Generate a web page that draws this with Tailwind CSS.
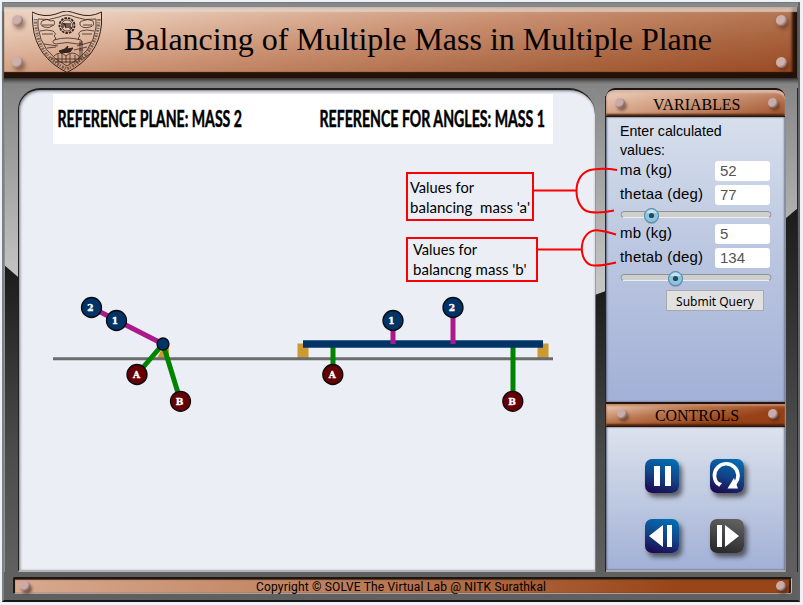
<!DOCTYPE html>
<html lang="en">
<head>
<meta charset="utf-8">
<title>Balancing of Multiple Mass in Multiple Plane</title>
<script src="https://cdn.jsdelivr.net/npm/@tailwindcss/browser@4"></script>
</head>
<body class="w-[803px] h-[605px] overflow-hidden bg-[#edf1f8] pt-[2px] pl-[2px] font-['Liberation_Sans',sans-serif] text-black">
<svg class="absolute size-0">
  <defs>
    <linearGradient id="light" gradientUnits="userSpaceOnUse" x1="0" y1="0" x2="0" y2="190"><stop offset="0" stop-color="#878787"/><stop offset="1" stop-color="#c4c4c4"/></linearGradient>
    <linearGradient id="dark" x1="0" y1="0" x2="0" y2="1"><stop offset="0" stop-color="#1b1b1b"/><stop offset="0.6" stop-color="#4b4b4b"/><stop offset="1" stop-color="#606060"/></linearGradient>
    <linearGradient id="blue" x1="0.3" y1="1" x2="0.6" y2="0"><stop offset="0" stop-color="#1d0b50"/><stop offset="0.5" stop-color="#124388"/><stop offset="1" stop-color="#036bb0"/></linearGradient>
    <linearGradient id="gray" x1="0.3" y1="1" x2="0.6" y2="0"><stop offset="0" stop-color="#292929"/><stop offset="1" stop-color="#606060"/></linearGradient>
  </defs>
</svg>
<div class="relative w-[798px] h-[600px] flex flex-col bg-[#606060] border-l-2 border-l-[#7d8281] border-t border-t-[#777] border-r-2 border-r-[#626267] border-b-2 border-b-[#171717]">
  <div class="h-[4px] shrink-0 bg-[#858789]"></div>
  <header class="h-[71px] w-[793px] shrink-0 flex items-center pl-[8px] pr-[10px] bg-[linear-gradient(172deg,#eccfbc_10%,#c98f70_45%,#a96540_75%,#98451c_100%)] shadow-[inset_0_6px_1px_-1px_#e0d8d1b0,inset_-5px_0_3px_#241107,inset_0_-6px_1px_#241107,0_4px_3px_#363636]">
    <div class="w-[12px] h-[53px] -mt-[2px] flex flex-col justify-between">
      <span class="size-[11px] rounded-full bg-[radial-gradient(circle_at_35%_35%,#cdb1ad_45%,#795247_80%)] shadow-[2px_3px_4px_#4a251588]"></span>
      <span class="size-[11px] rounded-full bg-[radial-gradient(circle_at_35%_35%,#cdb1ad_45%,#795247_80%)] shadow-[2px_3px_4px_#4a251588]"></span>
    </div>
    <svg class="ml-[8px] mt-[-1px] w-[70px] h-[62px]" viewBox="0 0 70 62" fill="none" stroke="#33231c" stroke-width="1">
      <path d="M0 1Q12 7 24 3Q31 0 35 0Q40 1 46 3Q58 7 69.500 1V13Q67 45 35 61.500Q4 46 1 15Z"/>
      <path d="M6 8Q17 10 27 6Q35 2 43 6Q53 10 64 8V16Q61 42 35 55Q9 42 6 16Z" stroke-width=".8"/>
      <path d="M3.500 8Q4 45 35 58Q65 43 67 8" stroke-width="3.200" stroke-dasharray="1.100 1.400 2 1" opacity=".55"/>
      <circle cx="35" cy="14.500" r="7.500" stroke-width="1.800" stroke-dasharray="2.600 1"/><circle cx="35" cy="14.500" r="5.600" stroke-width=".8"/>
      <path d="M31 12v5M32 12l2 5v-5M36 12v5M38 12v5h2" stroke-width="1.300"/>
      <path d="M10 10q5-3 9 0q5-2 3 4q-5 4-10 2q-5-2-2-6zM50 10q6-3 11 0q2 5-3 6q-7 2-10-2q-1-4 2-4M8 20q7-2 13 0q4 3 1 5q3 2 1 4M62 20q-8-2-13 0q-4 3-1 5q-3 2-1 4M10 14h11M51 14h9M10 23h11M50 23h10M22 29q13-4 27 0q2 4-3 4q-11-3-22 0q-5-1-2-4M12 33l14 2M15 37l9-1M45 35l14-4M42 39l13-3M22 45q6-6 12 0v7M34 45q6-6 13 0v6M20 46v3M26 43v9M30 43v9M38 43v10M43 44v7M21 48h29M23 51h23M48 30v17M50 30v17M47 33h4M47 39h4M51 48l8-6" stroke-width=".9" opacity=".85"/>
      <path d="M27 40q6-1 9-5l-1 3 6-1-3 4-9 1z" fill="#33231c"/>
    </svg>
    <svg class="ml-[22px] -mt-[4px] w-[590px] h-[50px] overflow-visible" viewBox="0 0 590 50"><text x="0" y="34" font-family="Liberation Serif, serif" font-size="31" textLength="588" lengthAdjust="spacingAndGlyphs">Balancing of Multiple Mass in Multiple Plane</text></svg>
    <div class="ml-auto w-[11px] h-[53px] -mt-[2px] flex flex-col justify-between">
      <span class="size-[11px] rounded-full bg-[radial-gradient(circle_at_35%_35%,#cdb1ad_45%,#795247_80%)] shadow-[2px_3px_4px_#4a251588]"></span>
      <span class="size-[11px] rounded-full bg-[radial-gradient(circle_at_35%_35%,#cdb1ad_45%,#795247_80%)] shadow-[2px_3px_4px_#4a251588]"></span>
    </div>
  </header>
  <div class="h-[10px] shrink-0 bg-[linear-gradient(#303030,#666_35%,#858585_60%)]"></div>

  <div class="h-[484px] shrink-0 flex bg-[linear-gradient(#898989_20%,#606060_70%)]">
    <svg class="w-[14px] h-[484px] shrink-0" viewBox="0 0 14 484"><path d="M0 0H14V189L0 177Z" fill="url(#light)"/><path d="M0 177L14 189V484H0Z" fill="url(#dark)"/><path d="M0 0V484" stroke="#8d9190" stroke-width="2"/></svg>
    <main class="w-[577px] h-[484px] shrink-0 bg-[#ebeef4] rounded-tl-[22px] rounded-tr-[26px] border-t-2 border-t-[#202020] border-l border-l-[#202020] border-b-2 border-b-[#b1b5b6] shadow-[inset_1px_1px_3px_#777b85]">
      <svg class="w-[576px] h-[480px]" viewBox="19 90 576 480">
        <rect x="53" y="94" width="500" height="50" fill="#fff"/>
        <g font-family="Lato, sans-serif" font-weight="700" font-size="22" stroke="#000" stroke-width=".5">
          <text x="57.500" y="127" textLength="184.500" lengthAdjust="spacingAndGlyphs">REFERENCE PLANE: MASS 2</text>
          <text x="319.500" y="127" textLength="225.500" lengthAdjust="spacingAndGlyphs">REFERENCE FOR ANGLES: MASS 1</text>
        </g>
        <path d="M157 358L163 347L169 348V358ZM297.500 343.500H308.500V358H297.500ZM537.500 343.500H548.500V358H537.500Z" fill="#cc9933"/>
        <path d="M53 358.800H553" stroke="#6b6b6b" stroke-width="3"/>
        <g stroke-width="5">
          <path d="M91.500 307.500L163 344" stroke="#ab1a8c"/>
          <path d="M163 344L137 374.500M163 344L180.500 401M333 344V374M513 344V401" stroke="#008400"/>
          <path d="M303 344H543" stroke="#003366" stroke-width="7.500"/>
          <path d="M393 320V344M453 307V344" stroke="#ab1a8c"/>
        </g>
        <g stroke="#080b12" stroke-width="1.300">
          <g fill="#003366"><circle cx="91.500" cy="307.500" r="10"/><circle cx="116.500" cy="320.500" r="10"/><circle cx="163" cy="344" r="6"/><circle cx="393" cy="320.500" r="10"/><circle cx="453" cy="307.500" r="10"/></g>
          <g fill="#660000"><circle cx="137" cy="374.500" r="10"/><circle cx="180.500" cy="401.300" r="10"/><circle cx="332.800" cy="374.500" r="10"/><circle cx="512.800" cy="401.300" r="10"/></g>
        </g>
        <g fill="#fff" stroke="#fff" stroke-width=".4" font-family="DejaVu Serif, serif" font-weight="700" font-size="9" text-anchor="middle">
          <text x="90.500" y="311">2</text><text x="115" y="324">1</text><text x="391.500" y="324">1</text><text x="452" y="311">2</text>
          <text x="136.500" y="378">A</text><text x="332.300" y="378">A</text><text x="179.500" y="404.500">B</text><text x="512" y="404.500">B</text>
        </g>
      </svg>
    </main>
    <svg class="w-[11px] h-[484px] shrink-0" viewBox="0 0 11 484"><path d="M0 0H11V203L0 207Z" fill="url(#light)"/><path d="M0 207L11 203V484H0Z" fill="url(#dark)"/><path d="M.500 20V484" stroke="#8b8f92" opacity=".7"/><path d="M10.500 8V484" stroke="#262626"/></svg>
    <aside class="w-[179px] h-[484px] shrink-0 flex flex-col border-b-2 border-b-[#a5a9ac]">
      <h2 class="h-[29px] shrink-0 flex items-center justify-between px-[9px] pt-[2px] rounded-t-[9px] border-t-2 border-[#1c1511] border-b bg-[linear-gradient(168deg,#f0d3c0,#cf9b7e_45%,#a05029)] shadow-[inset_0_3px_2px_#d8b8a5,inset_0_-2px_2px_#4d260f]">
        <span class="size-[10px] rounded-full bg-[radial-gradient(circle_at_35%_35%,#c9abaa_45%,#644a46_80%)] shadow-[2px_3px_3px_#4a251588] -mt-[3px]"></span>
        <svg class="w-[88px] h-[20px] ml-px mt-[1px]" viewBox="0 0 88 20"><text x="0" y="15" font-family="Liberation Serif, serif" font-size="16" textLength="87.500" lengthAdjust="spacingAndGlyphs">VARIABLES</text></svg>
        <span class="size-[10px] rounded-full bg-[radial-gradient(circle_at_35%_35%,#c9abaa_45%,#644a46_80%)] shadow-[2px_3px_3px_#4a251588] mr-[-2px] -mt-[3px]"></span>
      </h2>
      <form class="h-[285px] shrink-0 pl-[14px] pt-[5px] bg-[linear-gradient(#d7dfec,#bcc8e1_45%,#a3b0d7)] shadow-[inset_1px_0_2px_#646c80,inset_-1px_0_2px_#777f90] text-[15px]">
        <p class="leading-[19px] text-[14.2px]">Enter calculated<br>values:</p>
        <div class="mt-px h-[20px] flex items-center"><label class="w-[95px] pb-[2px] whitespace-nowrap tracking-[0.2px]">ma (kg)</label><input class="w-[55px] h-[20px] rounded-[3px] bg-white px-[5px] text-[#555]" value="52"></div>
        <div class="mt-[4px] h-[20px] flex items-center"><label class="w-[95px] pb-[2px] whitespace-nowrap tracking-[0.2px]">thetaa (deg)</label><input class="w-[55px] h-[20px] rounded-[3px] bg-white px-[5px] text-[#555]" value="77"></div>
        <svg class="block w-[153px] h-[19px]" viewBox="0 0 153 19"><rect x="1" y="6.500" width="150" height="6" rx="3" fill="#cfcfcf" stroke="#929292"/><path d="M3 12.500H149" stroke="#eee"/><circle cx="31.500" cy="11.500" r="7.500" fill="#626e7e" opacity=".45"/><circle cx="31.500" cy="10.500" r="7" fill="#8fc4de" stroke="#4c88a4"/><path d="M26 8Q31.500 1 37 8" fill="#c8e2ed"/><circle cx="31.500" cy="10.500" r="2.600" fill="#234b5f"/></svg>
        <div class="h-[20px] flex items-center"><label class="w-[95px] pb-[2px] whitespace-nowrap tracking-[0.2px]">mb (kg)</label><input class="w-[55px] h-[20px] rounded-[3px] bg-white px-[5px] text-[#555]" value="5"></div>
        <div class="mt-[4px] h-[20px] flex items-center"><label class="w-[95px] pb-[2px] whitespace-nowrap tracking-[0.2px]">thetab (deg)</label><input class="w-[55px] h-[20px] rounded-[3px] bg-white px-[5px] text-[#555]" value="134"></div>
        <svg class="block w-[153px] h-[19px]" viewBox="0 0 153 19"><rect x="1" y="6.500" width="150" height="6" rx="3" fill="#cfcfcf" stroke="#929292"/><path d="M3 12.500H149" stroke="#eee"/><circle cx="55.500" cy="11.500" r="7.500" fill="#626e7e" opacity=".45"/><circle cx="55.500" cy="10.500" r="7" fill="#8fc4de" stroke="#4c88a4"/><path d="M50 8Q55.500 1 61 8" fill="#c8e2ed"/><circle cx="55.500" cy="10.500" r="2.600" fill="#234b5f"/></svg>
        <button type="button" class="ml-[46px] mt-[3px] w-[98px] h-[21px] flex items-center justify-center pt-[2px] border border-[#a9a9a9] bg-[#e1e1e1] font-['Noto_Sans',sans-serif] text-[12px] whitespace-nowrap">Submit Query</button>
      </form>
      <h2 class="h-[25px] shrink-0 flex items-center justify-between px-[11px] border-t-2 border-b border-[#28130b] bg-[linear-gradient(170deg,#efd0bc,#ba7750_35%,#984016_70%)] shadow-[inset_0_2px_2px_#c18a6b,inset_0_-2px_2px_#502208]">
        <span class="size-[10px] rounded-full bg-[radial-gradient(circle_at_35%_35%,#c9abaa_45%,#644a46_80%)] shadow-[2px_3px_3px_#4a251588] -mt-[2px]"></span>
        <svg class="w-[85px] h-[20px] mt-[2px]" viewBox="0 0 85 20"><text x="0" y="15" font-family="Liberation Serif, serif" font-size="16" textLength="84" lengthAdjust="spacingAndGlyphs">CONTROLS</text></svg>
        <span class="size-[10px] rounded-full bg-[radial-gradient(circle_at_35%_35%,#c9abaa_45%,#644a46_80%)] shadow-[2px_3px_3px_#4a251588] mr-[-4px] -mt-[2px]"></span>
      </h2>
      <div class="grow grid grid-cols-[34px_34px] auto-rows-[34px] content-start gap-x-[31px] gap-y-[26px] pl-[39px] pt-[32px] bg-[linear-gradient(#dce3ed,#a2b0d6)] shadow-[inset_1px_0_2px_#646c80,inset_-1px_0_2px_#777f90]">
        <svg class="size-[34px] rounded-[7px] shadow-[3px_4px_5px_#222a]" viewBox="0 0 34 34"><rect width="34" height="34" fill="url(#blue)"/><path d="M9 7H15V27H9ZM20 7H26V27H20Z" fill="#fff"/></svg>
        <svg class="size-[34px] rounded-[7px] shadow-[3px_4px_5px_#222a]" viewBox="0 0 34 34"><rect width="34" height="34" fill="url(#blue)"/><path d="M8.500 25.500A11.800 11.800 0 1 1 25 24.500" fill="none" stroke="#fff" stroke-width="3.600"/><path d="M5 22L12 24L9 28ZM24 19L28 29.500H17.500Z" fill="#fff"/></svg>
        <svg class="size-[34px] rounded-[7px] shadow-[3px_4px_5px_#222a]" viewBox="0 0 34 34"><rect width="34" height="34" fill="url(#blue)"/><path d="M4 17L18 6V28ZM22 6H27V28H22Z" fill="#fff"/></svg>
        <svg class="size-[34px] rounded-[7px] shadow-[3px_4px_5px_#222a]" viewBox="0 0 34 34"><rect width="34" height="34" fill="url(#gray)"/><path d="M7 6H12V28H7ZM15 6L29 17L15 28Z" fill="#fff"/></svg>
      </div>
    </aside>
    <svg class="w-[13px] h-[484px] shrink-0" viewBox="0 0 13 484"><path d="M0 0H13V120L0 131Z" fill="url(#light)"/><path d="M0 131L13 120V484H0Z" fill="url(#dark)"/><path d="M.500 8V484" stroke="#8b8f92"/><path d="M12.500 0V484" stroke="#262626"/></svg>
  </div>

  <footer class="mt-[5px] ml-[9px] w-[779px] h-[17px] shrink-0 flex items-center justify-between pl-[5px] pr-[5px] border-t-2 border-l-2 border-[#1d1613] border-b border-b-[#a7a29e] border-r border-r-[#bbb] rounded-[2px] bg-[linear-gradient(90deg,#d8aa90,#b87550_50%,#994518_85%)] shadow-[inset_0_1px_1px_#563522,inset_-2px_0_1px_#28170f]">
    <span class="size-[10px] rounded-full bg-[radial-gradient(circle_at_35%_35%,#c9abaa_45%,#644a46_80%)] shadow-[2px_3px_3px_#4a2515aa]"></span>
    <svg class="w-[290px] h-[14px] mr-[5px] mt-px overflow-visible" viewBox="0 0 290 14"><text x="0" y="11" font-family="Roboto, sans-serif" font-size="12" textLength="290" lengthAdjust="spacing">Copyright © SOLVE The Virtual Lab @ NITK Surathkal</text></svg>
    <span class="size-[10px] rounded-full bg-[radial-gradient(circle_at_35%_35%,#c9abaa_45%,#644a46_80%)] shadow-[2px_3px_3px_#4a2515aa]"></span>
  </footer>

  <!-- Callouts span the canvas and the form -->
  <svg class="absolute left-[396px] top-[157px] w-[240px] h-[130px] pointer-events-none" viewBox="400 160 240 130">
    <g fill="none" stroke="#fa0000" stroke-width="2">
      <rect x="407" y="173" width="126" height="47"/><rect x="407" y="238" width="130" height="43"/>
      <path d="M534 190.500H576M538 249.500H581M617 170Q605 168 593 169.500C570 172 573 210 590 212Q600 213.500 614 210.500M616 234.500Q605 231 599 230.500C577 228 577 265 594 265.500Q602 266 616 262.500"/>
    </g>
    <g font-family="Lato, sans-serif" font-size="15">
      <text x="410" y="193" textLength="64" lengthAdjust="spacingAndGlyphs">Values for</text>
      <text x="410" y="213" textLength="120" lengthAdjust="spacingAndGlyphs" xml:space="preserve">balancing  mass 'a'</text>
      <text x="413" y="255" textLength="64" lengthAdjust="spacingAndGlyphs">Values for</text>
      <text x="413" y="275" textLength="113.500" lengthAdjust="spacingAndGlyphs">balancng mass 'b'</text>
    </g>
  </svg>
</div>
</body>
</html>
